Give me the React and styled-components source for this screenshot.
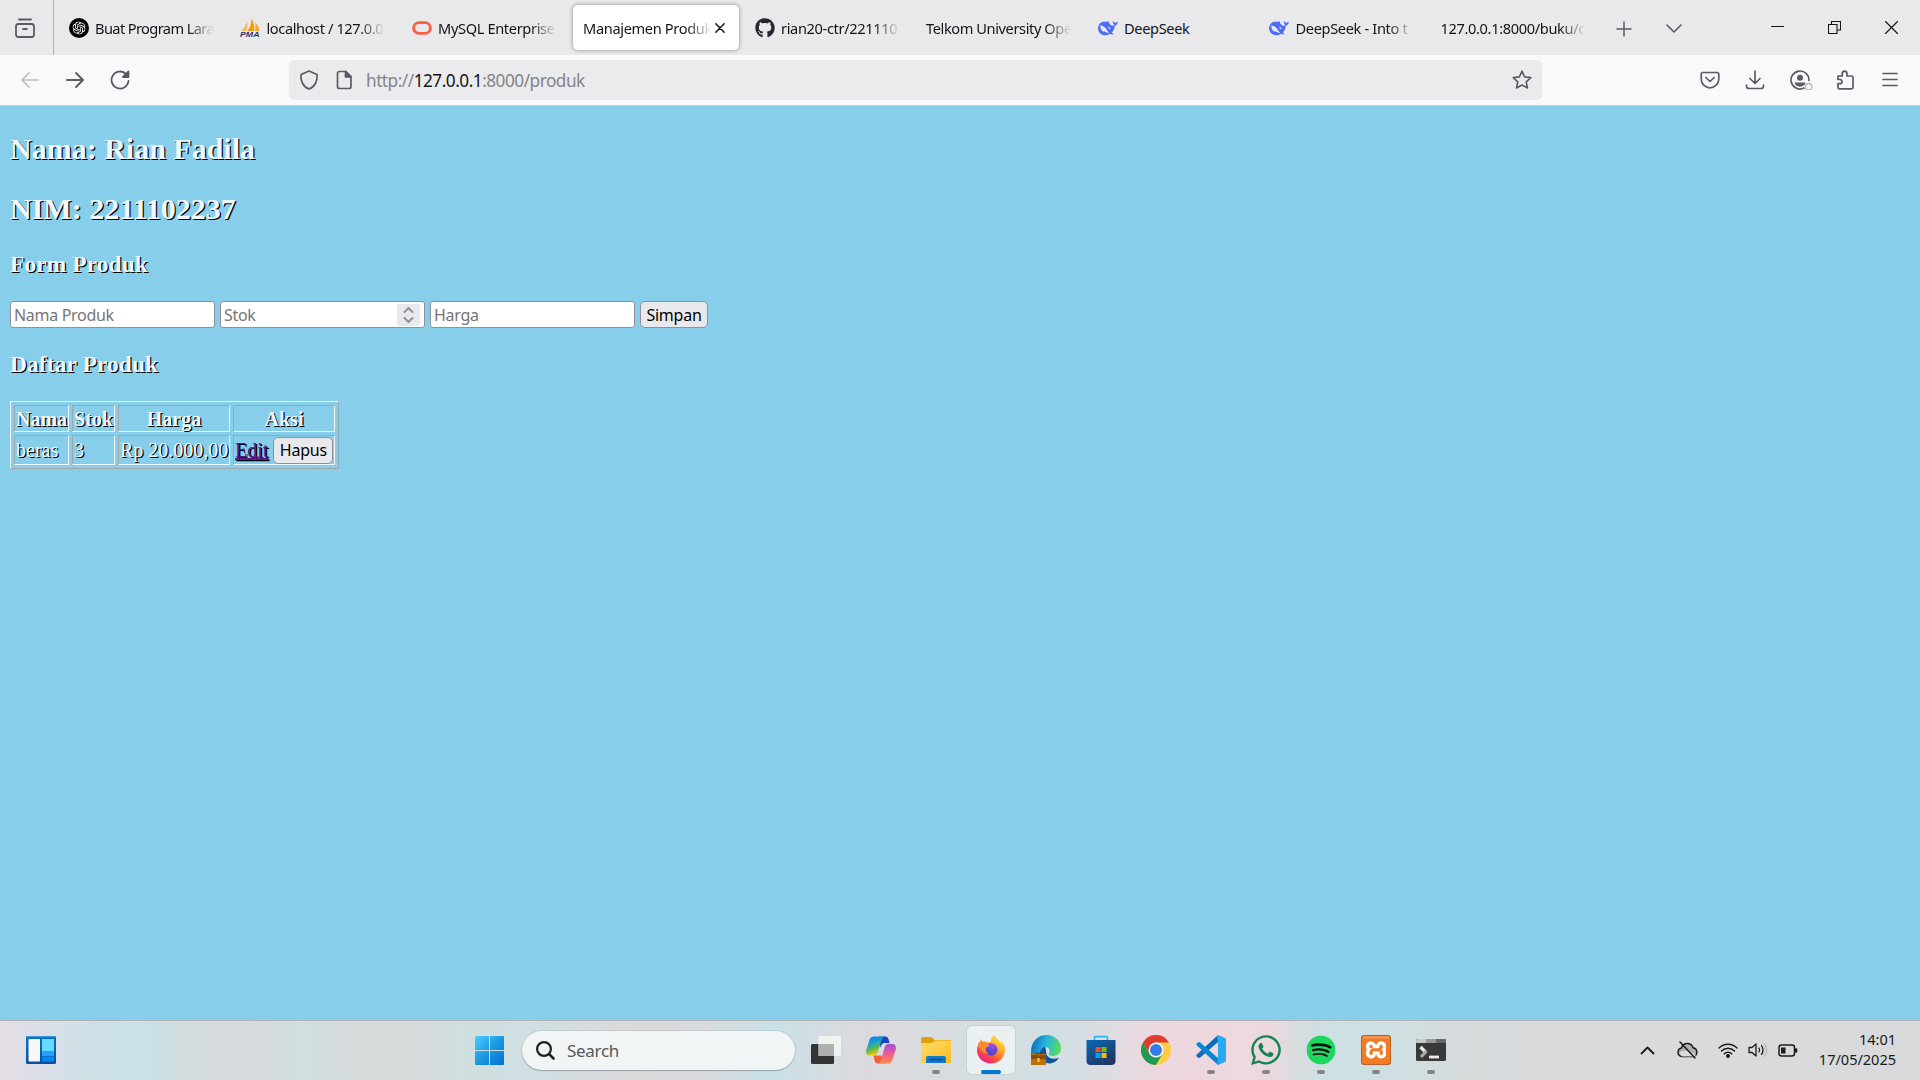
import React from "react";
import styled, { createGlobalStyle } from "styled-components";
import { FaGithub, FaWhatsapp } from "react-icons/fa";
import { SiOpenai, SiSpotify, SiXampp } from "react-icons/si";

const GlobalStyle = createGlobalStyle`
  * { box-sizing: border-box; }
  html, body { margin: 0; padding: 0; overflow: hidden; background: #87ceeb; }
  svg { display: block; flex: none; }
`;
const ui = `"Noto Sans", "Open Sans", sans-serif`;

const Screen = styled.div`
  width: 1920px;
  height: 1080px;
  display: flex;
  flex-direction: column;
  font-family: ${ui};
`;

/* ---------- Browser chrome ---------- */
const TabBar = styled.header`
  height: 55px;
  display: flex;
  background: #e9e9eb;
  color: #15141a;
`;
const AllTabs = styled.div`
  width: 54px;
  padding: 18px 0 0 15px;
  border-right: 1px solid #b0b0b6;
`;
const TabStrip = styled.nav`
  display: flex;
  gap: 5.5px;
  padding: 5px 0 5px 4.5px;
`;
const TabItem = styled.div`
  width: 166px;
  height: 45px;
  padding: 0 ${(p) => (p.$active ? 14.5 : 11)}px 0 10px;
  display: flex;
  align-items: center;
  gap: ${(p) => (p.$active ? 3 : 6.5)}px;
  border-radius: 5px;
  background: ${(p) => (p.$active ? "#fff" : "transparent")};
  box-shadow: ${(p) => (p.$active ? "0 0 4px rgba(0,0,0,.4)" : "none")};
`;
const TabTitle = styled.span`
  flex: 1;
  min-width: 0;
  overflow: hidden;
  white-space: nowrap;
  font-size: 14.6px;
  line-height: 22px;
  padding-top: 1px;
  letter-spacing: ${(p) => p.$spacing || -0.35}px;
  mask-image: ${(p) => (p.$fade ? "linear-gradient(to right, #000 calc(100% - 26px), transparent)" : "none")};
`;
const TabActions = styled.div`
  display: flex;
  align-items: center;
  gap: 34px;
  padding: 2px 0 0 19.5px;
`;
const WindowButtons = styled.div`
  margin-left: auto;
  display: flex;
  align-items: center;
  gap: 44px;
  padding-right: 22px;
`;
const Toolbar = styled.div`
  height: 51px;
  display: flex;
  align-items: center;
  background: #f9f9fb;
  border-bottom: 1px solid #cfcbd0;
  color: #5b5b66;
`;
const NavButtons = styled.div`
  width: 289px;
  display: flex;
  gap: 25px;
  padding-left: 20px;
`;
const UrlBar = styled.div`
  width: 1253px;
  height: 40px;
  display: flex;
  align-items: center;
  padding: 0 10px;
  border-radius: 5px;
  background: #ebebed;
`;
const UrlText = styled.span`
  flex: 1;
  margin-left: 12px;
  padding-top: 2px;
  font-size: 17.2px;
  line-height: 26px;
  letter-spacing: -0.48px;
  color: #84848a;
  b { color: #15141a; font-weight: 400; }
`;
const ToolIcons = styled.div`
  margin-left: auto;
  display: flex;
  gap: 25px;
  padding-right: 20px;
`;

/* ---------- Web page ---------- */
const Page = styled.main`
  height: 914px;
  padding: 26px 10px 0;
  background: #87ceeb;
  color: #f0f8ff;
  font-family: "Liberation Serif", "Times New Roman", serif;
  font-size: 20px;
  text-shadow: 1.25px 1.25px 0 #000;
`;
const Title = styled.h2`
  margin: 0 0 26px;
  font-size: 30px;
  line-height: 34px;
`;
const Section = styled.h3`
  margin: ${(p) => p.$top}px 0 23px;
  font-size: 23.4px;
  line-height: 27px;
  letter-spacing: 0.12px;
`;
const ProductForm = styled.form`
  display: flex;
  gap: 5px;
  height: 27px;
`;
const Field = styled.div`
  width: 205px;
  height: 27px;
  padding: 1px 4px 1px 3px;
  display: flex;
  align-items: center;
  justify-content: space-between;
  border: 1px solid #8f8f9d;
  border-radius: 3px;
  background: #fff;
  color: #757575;
  text-shadow: none;
  font: 16px/24px ${ui};
  letter-spacing: -0.3px;
`;
const Spinner = styled.span`
  width: 23px;
  height: 22px;
  display: grid;
  place-items: center;
  background: #e9e9ed;
`;
const Button = styled.button`
  width: ${(p) => p.$w}px;
  height: 27px;
  padding: 0;
  border: 1px solid #8f8f9d;
  border-radius: 5px;
  background: #e9e9ed;
  color: #000;
  font: 16px/24px ${ui};
  letter-spacing: -0.25px;
`;
const Table = styled.table`
  width: 329px;
  table-layout: fixed;
  border-collapse: separate;
  border-spacing: 3px;
  border: 1px solid;
  border-color: #f0f8ff #a2a6ab #a2a6ab #f0f8ff;
`;
const Col = styled.col`
  width: ${(p) => p.$w}px;
`;
const Row = styled.tr`
  height: ${(p) => p.$h}px;
`;
const cell = `
  white-space: nowrap;
  border: 1px solid;
  border-color: #a2a6ab #f0f8ff #f0f8ff #a2a6ab;
`;
const Th = styled.th`
  ${cell}
  padding: 2px 0 0 1px;
  line-height: 23px;
  text-indent: -1px;
`;
const Td = styled.td`
  ${cell}
  padding: 0 0 0 1px;
  line-height: 25px;
`;
const Actions = styled.div`
  display: flex;
  align-items: center;
  gap: 5px;
`;
const EditLink = styled.a`
  color: #551a8b;
  text-decoration: underline;
`;

/* ---------- Taskbar ---------- */
const Taskbar = styled.footer`
  height: 60px;
  display: flex;
  align-items: center;
  border-top: 1px solid #b3b1b8;
  background: linear-gradient(to right, #e6dde5 0, #d3e0e8 70px, #c8e1e7 150px, #d5dcde 190px, #d5dbdc 270px, #d0dfdf 300px,
    #d6dbdc 350px, #d6dbdc 420px, #cfdfdf 465px, #cfdfe3 530px, #dad9dc 620px, #d8dadd 700px, #c8e1e6 770px, #ddd9de 870px,
    #d7dde0 950px, #d2dfe3 1060px, #dddce1 1110px, #eed7de 1160px, #ecd9de 1270px, #d8dcdf 1295px, #cbe1e4 1340px,
    #d1dfe1 1410px, #d5dcdc 1440px, #d8dadc 1520px, #d9dadc 1920px);
`;
const Widgets = styled.div`
  width: 475px;
  padding: 0 0 1px 26px;
`;
const SearchBox = styled.div`
  width: 273px;
  height: 39px;
  margin: 0 7px 0 18px;
  display: flex;
  align-items: center;
  gap: 12px;
  padding-left: 14px;
  border-radius: 20px;
  background: #f2f5f6;
  box-shadow: 0 0 0 1px rgba(120,130,140,.18), 0 1px 1px rgba(70,80,90,.35);
  color: #55585a;
  font-size: 17px;
  letter-spacing: -0.3px;
`;
const Apps = styled.div`
  display: flex;
  gap: 7px;
  margin-bottom: 1px;
`;
const AppSlot = styled.div`
  width: 48px;
  height: 48px;
  padding-top: ${(p) => (p.$active ? 8 : 9)}px;
  display: flex;
  flex-direction: column;
  align-items: center;
  justify-content: space-between;
  border-radius: 5px;
  background: ${(p) => (p.$active ? "#ebf0f2" : "transparent")};
  box-shadow: ${(p) => (p.$active ? "0 0 0 1px rgba(160,170,180,.25)" : "none")};
`;
const Running = styled.i`
  width: ${(p) => (p.$active ? 20 : 8)}px;
  height: 4px;
  border-radius: 2px;
  background: ${(p) => (p.$active ? "#0078d4" : "#858587")};
`;
const Tray = styled.div`
  margin-left: auto;
  padding: 0 24px 1px 0;
  display: flex;
  align-items: center;
  color: #1b1b1c;
`;
const TrayIcon = styled.div`
  margin-right: ${(p) => p.$gap}px;
`;
const Clock = styled.div`
  width: 98px;
  padding-bottom: 3px;
  text-align: right;
  font-size: 14.6px;
  line-height: 20px;
  letter-spacing: -0.05px;
`;

/* ---------- Icons ---------- */
const Line = ({ w = 20, h = 20, sw = 1.7, children, ...rest }) => (
  <svg width={w} height={h} viewBox={`0 0 ${w} ${h}`} fill="none" stroke="currentColor" strokeWidth={sw} strokeLinecap="round" strokeLinejoin="round" {...rest}>{children}</svg>
);

const ChatGpt = () => (
  <svg width="20" height="20" viewBox="0 0 20 20"><circle cx="10" cy="10" r="10" fill="#000" /><g transform="translate(3.5 3.5)" color="#fff"><SiOpenai size={13} /></g></svg>
);
const Pma = () => (
  <svg width="20" height="20" viewBox="0 0 20 20">
    <path d="M1 13C4 11 6 7 7 3c1 4 0 7-1 10z" fill="#f7b558" /><path d="M7 13c3-3 5-8 4-13 3 4 4 9 3 13z" fill="#f89c0e" /><path d="M14.8 13c1-3 1-6 .2-9 3 3 4 6 4.600 9z" fill="#f9a72b" />
    <text x="0" y="19" fontFamily="Liberation Sans" fontSize="7.400" fontWeight="700" fontStyle="italic" fill="#34356d" textLength="19.500" lengthAdjust="spacingAndGlyphs">PMA</text>
  </svg>
);
const Oracle = () => <svg width="20" height="20" viewBox="0 0 20 20"><rect x="1.600" y="4.600" width="16.800" height="10.800" rx="5.400" fill="none" stroke="#f8604a" strokeWidth="2.900" /></svg>;
const Whale = () => (
  <svg width="20" height="20" viewBox="0 0 20 20">
    <path fill="#4d6bfe" d="M19.800 4c-.6-.4-1 .2-1.500.5-1 .5-1.500.2-2.200-.2-.7-.5-.9-1-1-1.600-.2.500-.5 1.200-.3 2 .200.900.8 1.500 1.200 1.800-.3 1-1 1.400-1.700 1.300-1.300-.4-2.300-1.700-3.300-2.900-.4-.5-.2-1.300 0-1.700-1-.1-1.800.6-2.600.6-2.500-.3-4.800-.3-6.500 1.600C.2 7.300-.2 9.900.300 12c.9 3.500 4 5.600 7.800 5.300 1.500-.1 2.700-.7 3.900-1.500.9.500 2 .8 3 .5.6-.2.300-.7-.2-1l-1-.6c2-2.200 2.700-4.400 2.900-7 1.800-.2 2.900-1.900 3.100-3.700z" />
    <path fill="#e9e9eb" d="M2.300 7.200c3.500.4 5.600 2.800 6.900 5.400.5 1 1.200 1.700 1.900 2.300-1.500.3-2.700-.3-3.600-1.100-.8-.6-1.500-.5-2 0C3.500 12.600 2 10 2.300 7.200z" /><path fill="#e9e9eb" d="M9.500 8.500c1.400-.3 2.800.9 3 2.500-.7.300-1.300.1-1.700-.4.2-.9-.4-1.700-1.300-2.100z" />
  </svg>
);

const WidgetsIcon = () => (
  <svg width="30" height="28" viewBox="0 0 30 28">
    <defs><linearGradient id="wg" x2="0" y2="1"><stop stopColor="#0b73c9" /><stop offset="1" stopColor="#0b4f9e" /></linearGradient></defs>
    <rect width="30" height="28" rx="1.500" fill="url(#wg)" /><rect width="30" height="1.200" fill="#3a95df" />
    <rect x="2.500" y="3" width="11.500" height="22.500" rx="1" fill="#f8f8f8" /><path d="M16 3h12v12H16z" fill="#67d8ff" /><path d="M16 15h12v5H16z" fill="#1ea5fb" /><path d="M16 20.500h12v5H16z" fill="#0a84ef" />
  </svg>
);
const Windows = () => (
  <svg width="29" height="29" viewBox="0 0 29 29">
    <defs><linearGradient id="win" x2="1" y2="1"><stop stopColor="#4bcfff" /><stop offset=".5" stopColor="#1b98e0" /><stop offset="1" stopColor="#0072cf" /></linearGradient></defs>
    <path fill="url(#win)" d="M1 0h13v14H0V1q0-1 1-1zM15 0h13q1 0 1 1v13H15zM0 15h14v14H1q-1 0-1-1zM15 15h14v13q0 1-1 1H15z" />
  </svg>
);
const TaskView = () => (
  <svg width="30" height="30" viewBox="0 0 30 30">
    <rect x="0" y="9" width="23" height="20" rx="1.500" fill="#343434" /><rect x="7.500" y="1" width="22.500" height="20" rx="1" fill="#f4f4f4" opacity=".9" /><path d="M7.500 9H23v12H7.500z" fill="#afb0b0" />
  </svg>
);
const Copilot = () => (
  <svg width="30" height="30" viewBox="0 0 30 30">
    <defs>
      <linearGradient id="c1" x2=".3" y2="1"><stop stopColor="#0b79e8" /><stop offset=".35" stopColor="#159bd8" /><stop offset=".7" stopColor="#5cba52" /><stop offset="1" stopColor="#f2c60e" /></linearGradient>
      <linearGradient id="c2" x2="0" y2="1"><stop stopColor="#a04fe0" /><stop offset=".45" stopColor="#e8599e" /><stop offset="1" stopColor="#fb8a4b" /></linearGradient>
    </defs>
    <path d="M13 1.500h6c2 0 3 1 3.600 3L23.500 8H19c-3 0-4 2-5 5z" fill="#1545c0" />
    <path d="M7.500 20.500h8l2 5c.6 2 1.500 3 3 3H12c-2 0-3-1-3.500-3z" fill="#f26039" />
    <path d="M8 1.500h10.500c-2.200.5-2.800 2.500-3.500 5l-3 10c-.8 2.800-2 4-4.500 4H4c-3.300 0-4.500-2.500-3.700-5.500l3-9.500c1-3 2-4 4.700-4z" fill="url(#c1)" />
    <path d="M22 28.500H12c2.200-.5 2.800-2.500 3.500-5l2.700-10c.8-2.800 2-4.500 4.500-4.500H26c3.300 0 4.500 2.500 3.700 5.500l-3 9.500c-1 3-2 4.500-4.700 4.500z" fill="url(#c2)" />
  </svg>
);
const Folder = () => (
  <svg width="30" height="30" viewBox="0 0 30 30">
    <defs><linearGradient id="fo" x2="1" y2="1"><stop stopColor="#ffdc6b" /><stop offset="1" stopColor="#fdbc22" /></linearGradient></defs>
    <path d="M0 3.500Q0 2 1.500 2H10q1 0 2 1.500L13.500 5H29q1 0 1 1v5H0z" fill="#dfa00d" /><path d="M0 8h10q1.500 0 2.500-1.300L14 5.500h16V28H0z" fill="url(#fo)" />
    <path d="M5 28v-5q0-2 2-2h16q2 0 2 2v5z" fill="#1579c9" /><path d="M9 24.600h12" stroke="#0b4e8d" strokeWidth="1.500" strokeLinecap="round" />
  </svg>
);
const Firefox = () => (
  <svg width="30" height="30" viewBox="0 0 30 30">
    <defs>
      <linearGradient id="ff" x1=".9" x2=".2" y2="1"><stop stopColor="#fff44f" /><stop offset=".35" stopColor="#ffb02e" /><stop offset=".65" stopColor="#ff5a36" /><stop offset="1" stopColor="#e8168c" /></linearGradient>
      <radialGradient id="fp" cx=".6" cy=".2"><stop stopColor="#a24bee" /><stop offset="1" stopColor="#5b45cf" /></radialGradient>
    </defs>
    <path d="M18.500 1c1 4 5.500 5 7.500 9 0-1 0-2-.5-3.500C28.500 9 29 14 29 16c-.3 8-6.500 13.500-14 13.500S1 24 1 16c0-4 1.600-6.500 3.300-9L5 4.700l1.200 3C8 7 9 7.200 10.600 8l3.800.3C15 5 16.500 2.500 18.500 1z" fill="url(#ff)" />
    <circle cx="15" cy="15.500" r="6.200" fill="url(#fp)" /><path d="M2 9c4 0 5 1.500 8 1.600h3.500c.5 1.700-2.200 2.200-3.500 3.400-.8 2.500.5 4.500 3 5.300-6 .7-10-3-11-10.300z" fill="#ff8a2b" />
  </svg>
);
const Edge = () => (
  <svg width="30" height="30" viewBox="0 0 30 30">
    <defs><linearGradient id="ed" y1=".3" x2="1" y2=".5"><stop stopColor="#0a6bc0" /><stop offset=".5" stopColor="#27b6dc" /><stop offset="1" stopColor="#5bde58" /></linearGradient></defs>
    <path d="M14 10C7 12 6 21 12 26c5 4 12 3 16-3.300-7 2.400-13 .3-13-7z" fill="#12549b" />
    <path d="M0 17C0 6 7 0 15.500 0 24 0 30 6.500 30 13c0 6-4.500 8-8 8-3 0-5-1-4-2.500 1.500-3 0-6.500-3.500-6.500-4 0-6 4-5.500 9L0 21z" fill="url(#ed)" />
    <rect y="19" width="15" height="11" fill="#c07008" /><path d="M0 20h15v4H0z" fill="#8e4d06" /><path d="M5 19.500v-1.300h5v1.300" stroke="#603407" fill="none" /><rect x="6.500" y="23" width="2" height="4" fill="#ffcf59" />
  </svg>
);
const Store = () => (
  <svg width="30" height="30" viewBox="0 0 30 30">
    <defs><linearGradient id="st" x2=".7" y2="1"><stop stopColor="#0869b8" /><stop offset="1" stopColor="#243460" /></linearGradient></defs>
    <path d="M8.500 6V2.500Q8.500 1.700 9.500 1.700h11q1 0 1 .8V6" fill="none" stroke="#29b9ee" strokeWidth="1.700" /><path d="M.5 5h29v21q0 4-4 4h-21q-4 0-4-4z" fill="url(#st)" />
    <path d="M9.500 12h5v5h-5z" fill="#f25022" /><path d="M15.500 12h5v5h-5z" fill="#7fba00" /><path d="M9.500 18h5v5h-5z" fill="#00a4ef" /><path d="M15.500 18h5v5h-5z" fill="#ffb900" />
  </svg>
);
const Chrome = () => (
  <svg width="30" height="30" viewBox="0 0 30 30">
    <circle cx="15" cy="15" r="15" fill="#ffcd42" />
    <path d="M2 7.500A15 15 0 0 1 28 7.500H15L8.500 18.750z" fill="#df3c30" /><path d="M2 7.500L8.500 18.750 15 22.500l6.500-3.750L15 30A15 15 0 0 1 2 7.500z" fill="#209a50" />
    <circle cx="15" cy="15" r="7.500" fill="#fff" /><circle cx="15" cy="15" r="6" fill="#357be8" />
  </svg>
);
const VsCode = () => (
  <svg width="30" height="30" viewBox="0 0 30 30">
    <path d="M22 7v-7L.8 19.500q-1 1 0 2l1.500 1.300q.8.600 1.700 0z" fill="#0d6eb5" /><path d="M22 23v7L.8 10.500q-1-1 0-2l1.500-1.300q.8-.6 1.700 0z" fill="#0a86d5" /><path d="M22 0l7 3q1 .5 1 1.500v21q0 1-1 1.500l-7 3-1-1.500 1-4V6l-1-4.500z" fill="#29a9f1" />
  </svg>
);
const Xampp = () => (
  <svg width="30" height="30" viewBox="0 0 30 30">
    <rect width="30" height="30" rx="3" fill="#b96128" /><rect x="1" y="1.500" width="28" height="27" rx="2" fill="#f47b25" />
    <rect x="5" y="5" width="20" height="20" fill="#fff" /><g transform="translate(1 1)" color="#f47b25"><SiXampp size={28} /></g><path d="M2 1.500h26v1.800H2z" fill="#e9a16e" />
  </svg>
);
const Terminal = () => (
  <svg width="30" height="30" viewBox="0 0 30 30">
    <rect y="4" width="30" height="22" rx="1.500" fill="#393939" /><path d="M0 8V5.500Q0 4 1.500 4H10v4z" fill="#c8c8c8" /><path d="M10 4h10v4H10z" fill="#999" /><path d="M20 4h8.500Q30 4 30 5.500V8H20z" fill="#666" />
    <path d="M4.500 12l5 5" stroke="#eee" strokeWidth="3.200" /><path d="M10.500 16l-5.500 6" stroke="#aaa" strokeWidth="3.200" /><path d="M13 22h10" stroke="#eee" strokeWidth="2.800" />
  </svg>
);
const Spotify = () => (
  <svg width="30" height="30" viewBox="0 0 30 30"><circle cx="15" cy="15" r="13" fill="#111" /><g transform="translate(.5 .5)" color="#1ed760"><SiSpotify size={29} /></g></svg>
);
const WhatsAppGlyph = styled(FaWhatsapp)`
  margin: -2px;
  color: #168553;
`;
const WhatsApp = () => <WhatsAppGlyph size={34} />;

/* ---------- Data ---------- */
const tabs = [
  { title: "Buat Program Lara", icon: <ChatGpt />, fade: true, spacing: -0.6 },
  { title: "localhost / 127.0.0", icon: <Pma />, fade: true, spacing: -0.4 },
  { title: "MySQL Enterprise", icon: <Oracle />, fade: true },
  { title: "Manajemen Produk", active: true, fade: true },
  { title: "rian20-ctr/221110", icon: <FaGithub size={20} color="#24292f" />, fade: true },
  { title: "Telkom University Ope", fade: true, spacing: -0.4 },
  { title: "DeepSeek", icon: <Whale /> },
  { title: "DeepSeek - Into t", icon: <Whale />, fade: true },
  { title: "127.0.0.1:8000/buku/c", fade: true },
];
const apps = [
  { Icon: TaskView }, { Icon: Copilot }, { Icon: Folder, running: true }, { Icon: Firefox, running: true, active: true },
  { Icon: Edge }, { Icon: Store }, { Icon: Chrome }, { Icon: VsCode, running: true }, { Icon: WhatsApp, running: true },
  { Icon: Spotify, running: true }, { Icon: Xampp, running: true }, { Icon: Terminal, running: true },
];

export default function App() {
  return (
    <Screen>
      <GlobalStyle />
      <TabBar>
        <AllTabs>
          <Line w={20} h={21} color="#5b5b66" sw={1.8}><path d="M4 1.500h12M3.500 6h13q2.500 0 2.500 2.500v8q0 2.500-2.500 2.500h-13Q1 19 1 16.500v-8Q1 6 3.500 6zM8 11h4" /></Line>
        </AllTabs>
        <TabStrip>
          {tabs.map((t) => (
            <TabItem key={t.title} $active={t.active}>
              {t.icon}
              <TabTitle $fade={t.fade} $spacing={t.spacing}>{t.title}</TabTitle>
              {t.active && <Line w={10} h={10} sw={1.5}><path d="M.8.8l8.400 8.400M9.200.8L.8 9.200" /></Line>}
            </TabItem>
          ))}
        </TabStrip>
        <TabActions>
          <Line w={16} h={16} color="#5b5b66" sw={1.5}><path d="M8 1v14M1 8h14" /></Line>
          <Line w={16} h={16} color="#5b5b66" sw={1.6}><path d="M1 4l7 7 7-7" /></Line>
        </TabActions>
        <WindowButtons>
          <Line w={13} h={13} sw={1}><path d="M.5 5.500h12" /></Line>
          <Line w={13} h={13} sw={1.1}><path d="M.5 3.500h8.500v9H.5zM3.500 3.500V.5h9v8.500H9" strokeLinejoin="miter" /></Line>
          <Line w={13} h={13} sw={1.2}><path d="M.5.5l12 12M12.500.5l-12 12" /></Line>
        </WindowButtons>
      </TabBar>

      <Toolbar>
        <NavButtons>
          <Line color="#bdbdc3"><path d="M18 10H2M9 3l-7 7 7 7" /></Line>
          <Line sw={1.9}><path d="M2 10h16M11 3l7 7-7 7" /></Line>
          <Line sw={1.8}><path d="M18.500 11a8.500 8.500 0 1 1-3-7.500l2 2" /><path d="M18.500 1.500v5.500H13z" fill="currentColor" /></Line>
        </NavButtons>
        <UrlBar>
          <Line sw={1.7}><path d="M10 1l8 3.500c.8 6-2 12.500-8 14.500C4 17 1.200 10.500 2 4.500z" /></Line>
          <Line style={{ marginLeft: 15 }}><path d="M5.500 1.500H12l5 5v10q0 2-2 2H5.500q-2 0-2-2v-13q0-2 2-2z" /><path d="M11.500 1.500v5.500H17z" fill="currentColor" /></Line>
          <UrlText>http://<b>127.0.0.1</b>:8000/produk</UrlText>
          <Line sw={1.6}><path d="M10 1.200l2.600 5.700 6.200.7-4.600 4.200 1.300 6.200L10 15l-5.500 3 1.300-6.200L1.200 7.600l6.200-.7z" /></Line>
        </UrlBar>
        <ToolIcons>
          <Line><path d="M3 2.500h14q1.800 0 1.800 1.800V9a8.800 8.800 0 0 1-17.600 0V4.300Q1.200 2.500 3 2.500zM5.800 7.500L10 11.500l4.200-4" /></Line>
          <Line><path d="M10 1v12M5 8.500l5 5 5-5M1.500 15v1q0 2.500 2.500 2.500h12q2.500 0 2.500-2.500v-1" /></Line>
          <Line w={23} style={{ marginRight: -3 }}><path d="M14 18.100A9 9 0 1 1 19 10.500" /><circle cx="10" cy="7.700" r="3" fill="currentColor" stroke="none" /><path d="M4.500 12.500h11l-1 2.500q-4.500 3.500-9 0z" fill="currentColor" stroke="none" /><circle cx="18.700" cy="16.700" r="3.200" stroke="#b5b5bb" strokeWidth="1.300" /></Line>
          <Line><path d="M3 6h4.200V3.700q0-2.500 2.300-2.500T12 3.700V6h4.500Q18 6 18 7.500V17q0 1.800-1.800 1.800H4.500Q3 18.800 3 17v-3.300h2q2 0 2-2T5 9.500H3V6z" /></Line>
          <Line><path d="M3 4h14M3 10h14M3 16h14" transform="translate(0 -.5)" /></Line>
        </ToolIcons>
      </Toolbar>

      <Page>
        <Title>Nama: Rian Fadila</Title>
        <Title>NIM: 2211102237</Title>
        <Section $top={-1}>Form Produk</Section>
        <ProductForm>
          <Field>Nama Produk</Field>
          <Field>Stok<Spinner><Line w={11} h={16} color="#8f8f9d" sw={2}><path d="M1.500 5l4-4 4 4M1.500 11l4 4 4-4" /></Line></Spinner></Field>
          <Field>Harga</Field>
          <Button type="button" $w={68}>Simpan</Button>
        </ProductForm>
        <Section $top={23}>Daftar Produk</Section>
        <Table>
          <colgroup><Col $w={55} /><Col $w={43} /><Col $w={112} /><Col $w={102} /></colgroup>
          <tbody>
            <Row $h={27}><Th>Nama</Th><Th>Stok</Th><Th>Harga</Th><Th>Aksi</Th></Row>
            <Row $h={30}>
              <Td>beras</Td><Td>3</Td><Td>Rp 20.000,00</Td>
              <Td><Actions><EditLink>Edit</EditLink><Button type="button" $w={60}>Hapus</Button></Actions></Td>
            </Row>
          </tbody>
        </Table>
      </Page>

      <Taskbar>
        <Widgets><WidgetsIcon /></Widgets>
        <Windows />
        <SearchBox>
          <Line w={19} h={19} color="#222" sw={2.2}><circle cx="8" cy="8" r="6.900" /><path d="M13.200 13.200l4.300 4.300" strokeWidth="2.600" /></Line>
          Search
        </SearchBox>
        <Apps>
          {apps.map(({ Icon, running, active }, i) => (
            <AppSlot key={i} $active={active}>
              <Icon />
              {running && <Running $active={active} />}
            </AppSlot>
          ))}
        </Apps>
        <Tray>
          <TrayIcon $gap={22}><Line w={15} h={9} sw={1.8}><path d="M1.500 7.500l6-6 6 6" /></Line></TrayIcon>
          <TrayIcon $gap={20}><Line w={21} h={18} sw={1.5}><path d="M5 15.500a4.300 4.300 0 0 1-.5-8.500 6 6 0 0 1 11.500-.3 4.500 4.500 0 0 1 .5 8.800z" fill="#aeb0b2" /><path d="M2 12q6-6 17 2l-2 1.500H5z" fill="#d9dadc" stroke="none" /><path d="M3 1l15 16" /></Line></TrayIcon>
          <TrayIcon $gap={10}><Line w={20} h={16} sw={1.4}><path d="M1 6a12.700 12.700 0 0 1 18 0M3.500 9a9 9 0 0 1 13 0M6.300 11.700a5.300 5.300 0 0 1 7.400 0" /><circle cx="10" cy="14" r="1.300" fill="currentColor" /></Line></TrayIcon>
          <TrayIcon $gap={10}><Line w={20} h={16} sw={1.3}><path d="M1 5.500h3L8 2v12l-4-3.500H1zM11 6q1.300 2 0 4M13.500 3.500q3 4.500 0 9" /><path d="M16.500 1.500q4 6.500 0 13" stroke="#b5b6b9" /></Line></TrayIcon>
          <TrayIcon $gap={0}><Line w={20} h={13} sw={1.5}><rect x="1" y="1" width="15.500" height="11" rx="2.500" /><path d="M3 3.500h4.500v6H3z" fill="currentColor" stroke="none" /><path d="M18 5.500v2" strokeWidth="2.500" /></Line></TrayIcon>
          <Clock>14:01<br />17/05/2025</Clock>
        </Tray>
      </Taskbar>
    </Screen>
  );
}
